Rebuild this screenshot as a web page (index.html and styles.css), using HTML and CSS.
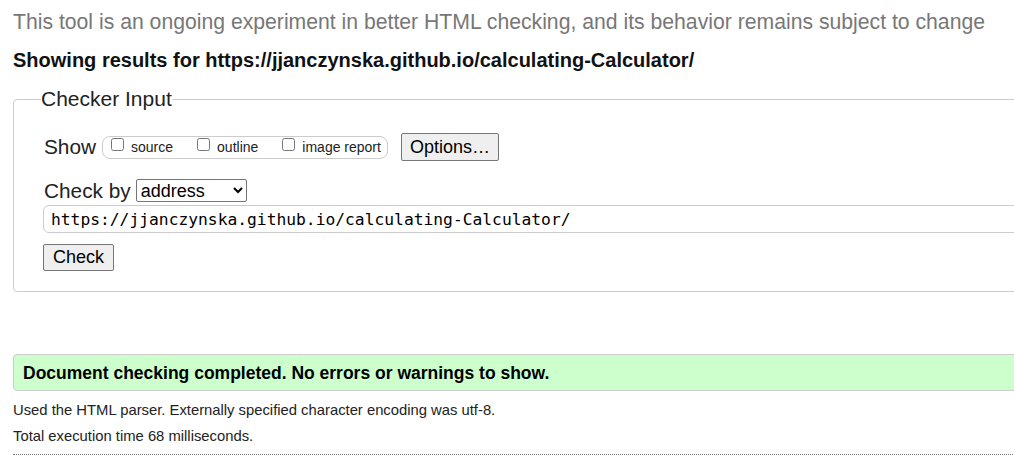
FILE: index.html
```html
<!DOCTYPE html>
<html lang="en">
<head>
<meta charset="utf-8">
<title>Nu Html Checker</title>
<link rel="stylesheet" href="styles.css">
</head>
<body>
<div class="page">
  <p class="notice">This tool is an ongoing experiment in better HTML checking, and its behavior remains subject to change</p>
  <p class="showing">Showing results for https://jjanczynska.github.io/calculating-Calculator/</p>
  <fieldset class="checker">
    <legend>Checker Input</legend>
    <div class="row show-row">
      <span class="label">Show</span>
      <span class="pill">
        <label class="opt"><input type="checkbox">source</label>
        <label class="opt"><input type="checkbox">outline</label>
        <label class="opt"><input type="checkbox">image report</label>
      </span>
      <button class="btn btn-options" type="button">Options…</button>
    </div>
    <div class="row by-row">
      <span class="label">Check by</span>
      <select class="select"><option>address</option><option>file upload</option><option>text input</option></select>
    </div>
    <div class="row">
      <input class="url" type="text" value="https://jjanczynska.github.io/calculating-Calculator/">
    </div>
    <div class="row">
      <button class="btn btn-check" type="button">Check</button>
    </div>
  </fieldset>
  <div class="success">Document checking completed. No errors or warnings to show.</div>
  <p class="details">Used the HTML parser. Externally specified character encoding was utf-8.</p>
  <p class="details">Total execution time 68 milliseconds.</p>
  <hr class="dotted">
</div>
</body>
</html>
```
FILE: styles.css
```css
html { overflow: hidden; }
body {
  margin: 0;
  font-family: "Liberation Sans", Arial, sans-serif;
  color: #000;
  background: #fff;
}
.page {
  width: 1040px;
  padding: 0 0 0 13px;
}
.notice {
  margin: 0;
  padding-top: 10px;
  font-size: 21.2px;
  line-height: 24px;
  color: #777;
}
.showing {
  margin: 14px 0 0;
  font-size: 20px;
  line-height: 24px;
  font-weight: bold;
  color: #111;
}
.checker {
  margin: 15px 0 0;
  padding: 22px 0 20px 30px;
  border: 1px solid #ccc;
  border-radius: 4px;
}
.checker legend {
  padding: 0;
  margin-left: -3px;
  font-size: 21px;
  line-height: 24px;
  color: #222;
}
.row {
  display: flex;
  align-items: center;
}
.label {
  font-size: 20.8px;
  line-height: 24px;
  color: #222;
}
.show-row { height: 28px; }
.pill {
  display: flex;
  align-items: center;
  box-sizing: border-box;
  height: 23px;
  margin-left: 6px;
  padding: 0 6px 0 8px;
  border: 1px solid #ccc;
  border-radius: 8px;
  gap: 24px;
}
.opt {
  display: flex;
  align-items: center;
  font-size: 14px;
  line-height: 16px;
  color: #222;
}
.opt input {
  margin: 0 7px 5px 0;
  width: 13px;
  height: 13px;
}
.btn {
  font-family: "Liberation Sans", Arial, sans-serif;
  background: #efefef;
  border: 1px solid #767676;
  border-radius: 2px;
  color: #000;
  padding: 0;
}
.btn-options {
  margin-left: 13px;
  height: 28px;
  width: 98px;
  font-size: 18px;
}
.by-row { margin-top: 18px; height: 23px; }
.select {
  margin-left: 5px;
  height: 23px;
  width: 111px;
  font-family: "Liberation Sans", Arial, sans-serif;
  font-size: 18px;
  border: 1px solid #767676;
  border-radius: 2px;
  background: #fff;
  color: #000;
}
.url {
  margin: 3px 0 0 -1px;
  width: 1000px;
  height: 28px;
  box-sizing: border-box;
  padding: 0 7px;
  font-family: "DejaVu Sans Mono", "Liberation Mono", monospace;
  font-size: 16.3px;
  border: 1px solid #ccc;
  border-radius: 6px;
  color: #000;
}
.btn-check {
  margin: 11px 0 0 -1px;
  height: 27px;
  width: 71px;
  font-size: 18px;
}
.success {
  margin-top: 62px;
  height: 37px;
  box-sizing: border-box;
  padding: 0 9px;
  display: flex;
  align-items: center;
  background: #ccffcc;
  border: 1px solid #ccc;
  border-radius: 4px;
  font-size: 17.5px;
  font-weight: bold;
  line-height: 20px;
}
.details {
  margin: 10px 0 0;
  font-size: 14.8px;
  line-height: 18px;
  color: #222;
}
.details + .details { margin-top: 8px; }
.dotted {
  margin: 9px 0 0;
  border: 0;
  border-top: 1px dotted #777;
  height: 0;
}
```
